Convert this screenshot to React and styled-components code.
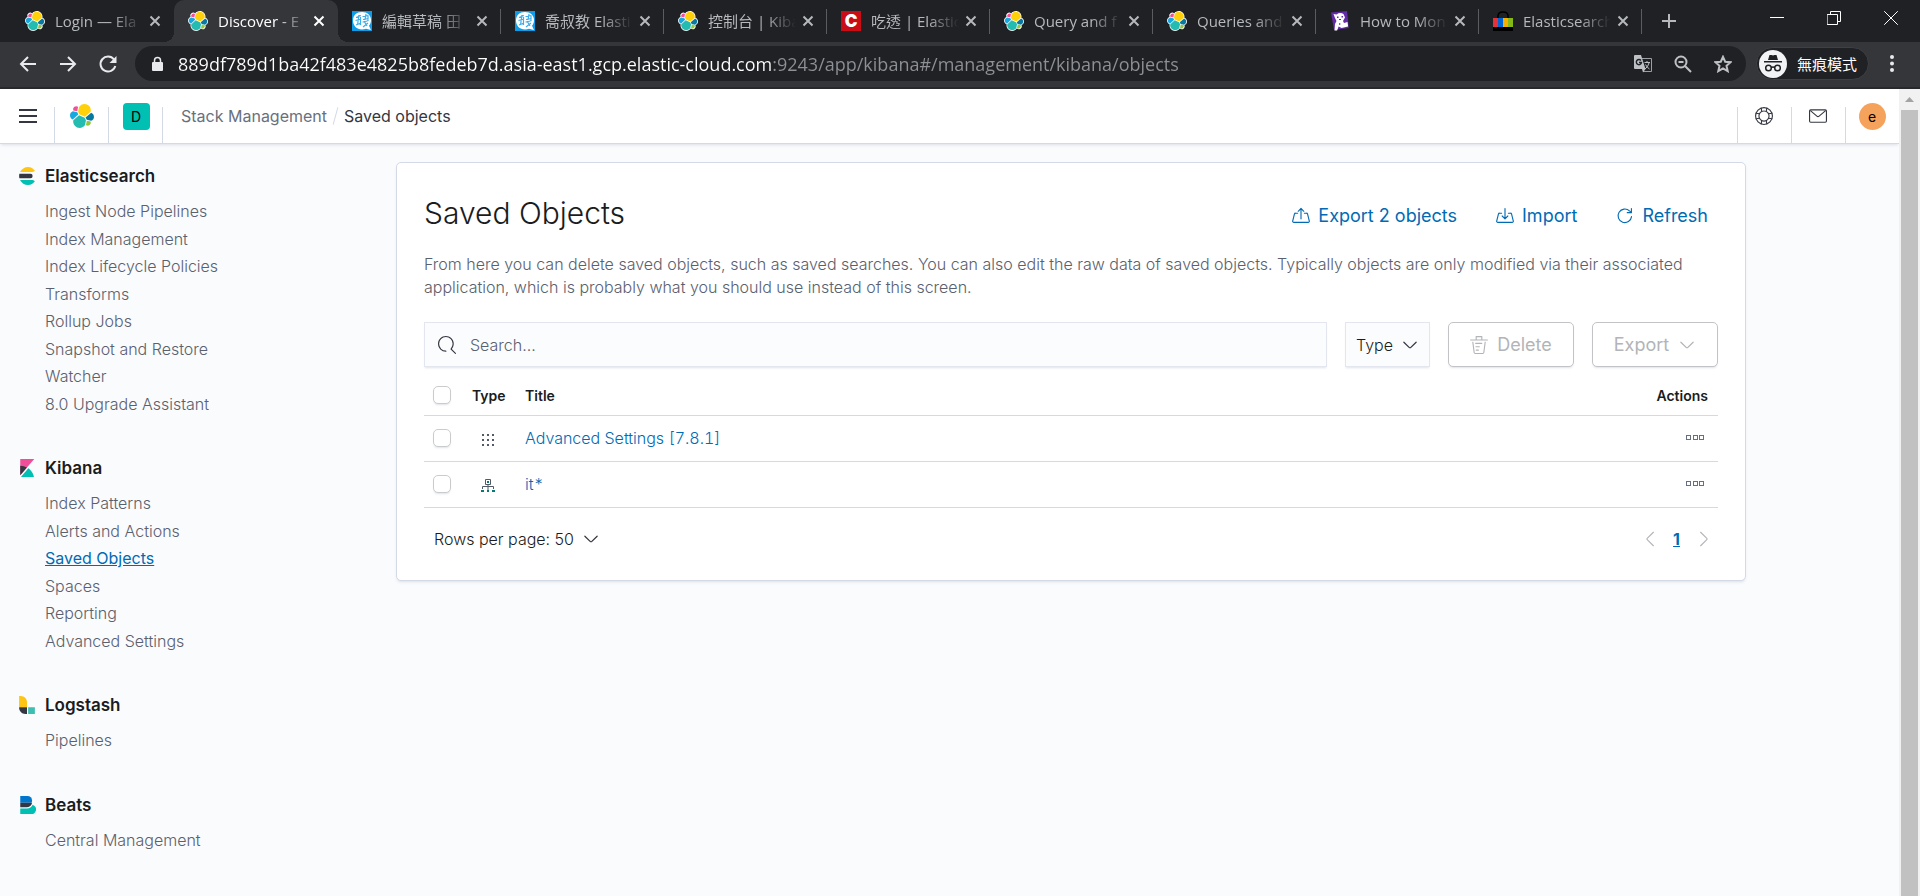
import React from 'react';
import styled, { createGlobalStyle, css } from 'styled-components';

const Global = createGlobalStyle`
  *, *::before, *::after { box-sizing: border-box; }
  html, body, #root { height: 100%; }
  body { margin: 0; overflow: hidden; background: #fafbfd; }
  button, input, select { font: inherit; color: inherit; margin: 0; }
  button { cursor: pointer; }
  svg { display: block; flex: none; }
`;

const uiFont = "Inter, 'Liberation Sans', sans-serif";
const chromeFont = "'Open Sans', 'Noto Sans CJK TC', sans-serif";

const plainButton = css`
  display: flex;
  align-items: center;
  justify-content: center;
  padding: 0;
  border: 0;
  background: none;
`;

const Window = styled.div`
  display: flex;
  flex-direction: column;
  height: 100vh;
`;

/* ---------- Browser frame ---------- */

const TabStrip = styled.div`
  display: flex;
  flex: none;
  height: 42px;
  padding: 0 1px 0 11px;
  background: #202124;
  font-family: ${chromeFont};
  font-size: 15px;
  color: #b5b8bc;
`;

const Tab = styled.div`
  position: relative;
  display: flex;
  align-items: center;
  flex: 0 1 ${(p) => (p.$active ? 164 : 163)}px;
  min-width: 0;
  padding: 0 11px 0 14px;
  border-radius: 10px 10px 0 0;
  background: ${(p) => (p.$active ? '#35363a' : 'transparent')};
  color: ${(p) => (p.$active ? '#ffffff' : 'inherit')};

  &::before, &::after {
    content: ${(p) => (p.$active ? "''" : 'none')};
    position: absolute;
    bottom: 0;
    width: 10px;
    height: 10px;
  }
  &::before {
    right: 100%;
    background: radial-gradient(circle at 0 0, transparent 10px, #35363a 10px);
  }
  &::after {
    left: 100%;
    background: radial-gradient(circle at 100% 0, transparent 10px, #35363a 10px);
  }
`;

const TabTitle = styled.span`
  flex: 1;
  min-width: 0;
  margin: 0 4px 0 10px;
  line-height: 24px;
  overflow: hidden;
  white-space: nowrap;
  mask-image: linear-gradient(90deg, #000 65%, transparent);
`;

const TabClose = styled.button`
  ${plainButton}
  width: 16px;
  height: 16px;
`;

const TabDivider = styled.i`
  position: absolute;
  right: 0;
  top: 9px;
  width: 1px;
  height: 25px;
  background: #5a5c60;
`;

const NewTab = styled.button`
  ${plainButton}
  width: 54px;
`;

const WindowControls = styled.div`
  display: flex;
  margin-left: auto;
  height: 36px;
`;

const WindowButton = styled.button`
  ${plainButton}
  width: 57px;
  color: #ffffff;
`;

const Toolbar = styled.div`
  display: flex;
  align-items: center;
  flex: none;
  height: 47px;
  padding: 0 13px 2px 8px;
  border-bottom: 2px solid #28292c;
  background: #35363a;
  font-family: ${chromeFont};
  color: #e8eaed;
`;

const ToolButton = styled.button`
  ${plainButton}
  width: ${(p) => p.$width || 40}px;
  height: 35px;
`;

const Omnibox = styled.div`
  display: flex;
  align-items: center;
  flex: 1;
  min-width: 0;
  height: 35px;
  margin-left: 7px;
  padding: 0 3px 0 15px;
  border-radius: 18px;
  background: #202124;
  color: #bdc1c6;
`;

const Address = styled.input`
  flex: 1;
  min-width: 0;
  height: 30px;
  margin-left: 13px;
  padding: 0;
  border: 0;
  outline: 0;
  font-size: 18px;
  color: #ffffff;
  background: linear-gradient(90deg, #ffffff 594px, #8d9196 594px) text;
  -webkit-text-fill-color: transparent;
`;

const Profile = styled.button`
  ${plainButton}
  gap: 10px;
  height: 33px;
  margin: 0 8px 0 10px;
  padding: 0 11px 0 2px;
  border: 1px solid #3f4044;
  border-radius: 17px;
  background: #202124;
  color: #ffffff;
  font-size: 15px;
`;

/* ---------- Kibana ---------- */

const Viewport = styled.div`
  display: flex;
  flex: 1;
  min-height: 0;
  font-family: ${uiFont};
  font-size: 16px;
  font-weight: 300;
  color: #343741;
`;

const Page = styled.div`
  flex: 1;
  min-width: 0;
  overflow: hidden;
`;

const ScrollTrack = styled.div`
  flex: none;
  width: 21px;
  padding: 0 2px;
  background: #f1f1f1;
`;

const ScrollArrow = styled.div`
  display: flex;
  align-items: center;
  justify-content: center;
  height: 21px;
`;

const ScrollThumb = styled.div`
  height: 100%;
  background: #c1c1c1;
`;

const Header = styled.header`
  display: flex;
  align-items: center;
  position: relative;
  height: 55px;
  padding-left: 1px;
  border-bottom: 1px solid #d3dae6;
  background: #ffffff;
  box-shadow: 0 2px 3px -1px rgba(152, 162, 179, 0.3);
`;

const HeaderCell = styled.div`
  display: flex;
  align-items: center;
  justify-content: center;
  flex: none;
  width: 54px;
  height: 54px;
  background: linear-gradient(#d3dae6, #d3dae6) ${(p) => (p.$side === 'left' ? 'left' : 'right')} bottom / 1px 36px no-repeat;
`;

const HeaderButton = styled.button`
  ${plainButton}
  width: 36px;
  height: 36px;
`;

const Avatar = styled.span`
  display: flex;
  align-items: center;
  justify-content: center;
  width: 27px;
  height: 27px;
  border-radius: ${(p) => (p.$round ? '50%' : '4px')};
  background: ${(p) => p.$color};
  color: #000000;
  font-size: 14px;
  font-weight: 400;
`;

const Breadcrumbs = styled.nav`
  display: flex;
  align-items: center;
  gap: 7px;
  flex: 1;
  margin-left: 18px;
  font-weight: 400;
`;

const Crumb = styled.a`
  color: ${(p) => (p.$current ? '#343741' : '#69707d')};
  text-decoration: none;
`;

const CrumbSlash = styled.i`
  width: 1px;
  height: 18px;
  margin: 0 1px;
  background: #d3dae6;
  transform: rotate(15deg);
`;

const Body = styled.div`
  display: flex;
  align-items: flex-start;
  padding: 18px;
`;

const SideNav = styled.nav`
  flex: none;
  width: 216px;
  margin-right: 27px;
`;

const NavGroup = styled.section`
  margin-bottom: 37px;
`;

const NavHeading = styled.h2`
  display: flex;
  align-items: center;
  gap: 9px;
  height: 28px;
  margin: 0 0 7px;
  font-size: 17px;
  font-weight: 600;
  color: #1a1c21;
`;

const NavList = styled.ul`
  display: grid;
  grid-auto-rows: 28px 27px;
  align-items: center;
  margin: 0;
  padding: 0 0 0 27px;
  list-style: none;
`;

const NavLink = styled.a`
  color: ${(p) => (p.$active ? '#006bb4' : '#5a616e')};
  font-weight: ${(p) => (p.$active ? 400 : 300)};
  text-decoration: ${(p) => (p.$active ? 'underline' : 'none')};
`;

const Main = styled.main`
  flex: 1;
  min-width: 0;
`;

const Panel = styled.section`
  max-width: 1350px;
  margin: 0 auto;
  padding: 27px 27px 18px;
  border: 1px solid #d3dae6;
  border-radius: 5px;
  background: #ffffff;
  box-shadow: 0 2px 3px -1px rgba(152, 162, 179, 0.3);
`;

const TitleRow = styled.div`
  display: flex;
  justify-content: space-between;
  height: 48px;
`;

const Title = styled.h1`
  margin: 0;
  font-size: 30px;
  line-height: 46px;
  font-weight: 300;
  color: #1a1c21;
`;

const TitleActions = styled.div`
  display: flex;
  align-items: flex-end;
  gap: 19px;
`;

const LinkButton = styled.button`
  ${plainButton}
  gap: 8px;
  height: 45px;
  padding: 0 10px;
  font-size: 18px;
  font-weight: 400;
  color: #006bb4;
`;

const Description = styled.p`
  margin: 15px 0 23px;
  line-height: 23px;
  color: #5a616e;
`;

const FilterRow = styled.div`
  display: flex;
  gap: 18px;
  height: 45px;
`;

const field = css`
  border: 1px solid #e3e6ef;
  background: #fbfcfd;
  box-shadow: 0 2px 2px -1px rgba(152, 162, 179, 0.3);
`;

const SearchBox = styled.label`
  ${field}
  display: flex;
  align-items: center;
  gap: 14px;
  flex: 1;
  min-width: 0;
  padding: 0 13px;
`;

const SearchInput = styled.input`
  flex: 1;
  min-width: 0;
  padding: 0;
  border: 0;
  outline: 0;
  background: none;
  &::placeholder { color: #5a616e; opacity: 1; }
`;

const SelectBox = styled.label`
  ${(p) => p.$framed && field}
  display: flex;
  align-items: center;
  gap: 8px;
  padding: 0 10px;
`;

const Select = styled.select`
  appearance: none;
  padding: 0;
  border: 0;
  outline: 0;
  background: none;
  color: #1a1c21;
`;

const OutlineButton = styled.button`
  ${plainButton}
  gap: 9px;
  width: 126px;
  border: 1px solid #c2c3c6;
  border-radius: 5px;
  background: #ffffff;
  box-shadow: 0 2px 2px -1px rgba(152, 162, 179, 0.3);
  font-size: 18px;
  font-weight: 400;
  color: #b2b4b8;
`;

const Table = styled.table`
  width: 100%;
  border-collapse: collapse;
  table-layout: fixed;
`;

const Row = styled.tr`
  height: ${(p) => (p.$head ? 48 : 46)}px;
  border-bottom: 1px solid #d3dae6;
`;

const cell = css`
  padding: 0 ${(p) => (p.$end ? 10 : 9)}px;
  text-align: ${(p) => (p.$end ? 'right' : 'left')};
`;

const HeadCell = styled.th`
  ${cell}
  width: ${(p) => (p.$width ? `${p.$width}px` : 'auto')};
  padding-top: 9px;
  font-size: 14px;
  font-weight: 600;
  color: #1a1c21;
`;

const Cell = styled.td`
  ${cell}
`;

const Checkbox = styled.input`
  appearance: none;
  display: block;
  width: 18px;
  height: 18px;
  margin: 0;
  border: 1px solid #c9cbcd;
  border-radius: 5px;
  background: #ffffff;
  box-shadow: 0 2px 2px -1px rgba(152, 162, 179, 0.3);
`;

const TypeIcon = styled.span`
  display: flex;
  padding: 3px 0 0 7px;
`;

const ObjectLink = styled.a`
  color: #006bb4;
  font-variant-numeric: tabular-nums;
  text-decoration: none;
`;

const MoreButton = styled.button`
  ${plainButton}
  width: 26px;
  height: 24px;
  margin-left: auto;
`;

const Footer = styled.div`
  display: flex;
  align-items: center;
  justify-content: space-between;
  height: 45px;
  margin-top: 9px;
`;

const Pager = styled.div`
  display: flex;
  align-items: center;
  padding-right: 1px;
`;

const PageButton = styled.button`
  ${plainButton}
  width: 27px;
  height: 27px;
  color: ${(p) => (p.$current ? '#006bb4' : '#b2b4b8')};
  font-weight: ${(p) => (p.$current ? 700 : 400)};
  text-decoration: ${(p) => (p.$current ? 'underline' : 'none')};
`;

/* ---------- Icons ---------- */

const Stroke = ({ size = 18, box = 16, w = 1, children }) => (
  <svg width={size} height={size} viewBox={`0 0 ${box} ${box}`} fill="none" stroke="currentColor" strokeWidth={w} strokeLinecap="round" strokeLinejoin="round" aria-hidden="true">
    {children}
  </svg>
);

const ElasticLogo = ({ size }) => (
  <svg width={size} height={size} viewBox="0 0 32 32" aria-hidden="true">
    <path fill="#fff" d="M32 16.77c0-2.68-1.66-5.03-4.16-5.94.11-.57.17-1.14.17-1.74C28 4.08 23.93 0 18.9 0c-2.94 0-5.68 1.4-7.4 3.8a4.83 4.83 0 0 0-7.52 5.6C1.6 10.3 0 12.6 0 15.2c0 2.69 1.67 5.06 4.19 5.96-.12.56-.17 1.15-.17 1.73 0 5 4.07 9.07 9.08 9.07 2.95 0 5.68-1.41 7.39-3.8a4.83 4.83 0 0 0 7.53-5.58C30.4 21.68 32 19.37 32 16.77" />
    <path fill="#fed10a" d="M12.58 13.79l7.02 3.2 7.08-6.2a7.85 7.85 0 0 0 .15-1.56 7.92 7.92 0 0 0-14.46-4.45l-1.18 6.1z" />
    <path fill="#24bbb1" d="M5.33 21.2c-.1.51-.15 1.03-.15 1.56 0 4.38 3.56 7.95 7.94 7.95 2.64 0 5.11-1.31 6.59-3.5l1.17-6.09-1.56-2.98-7.04-3.2z" />
    <path fill="#ef5098" d="M5.29 9.08l4.81 1.14 1.05-5.47a3.8 3.8 0 0 0-5.86 4.33z" />
    <path fill="#17a8e0" d="M4.87 10.23a5.31 5.31 0 0 0-3.6 5.01c0 2.22 1.36 4.18 3.43 4.97l6.75-6.1-1.24-2.65z" />
    <path fill="#93c83e" d="M20.87 27.2a3.8 3.8 0 0 0 5.84-4.3l-4.8-1.13z" />
    <path fill="#0779a1" d="M21.85 20.63l5.28 1.23a5.31 5.31 0 0 0 3.6-5.01c0-2.22-1.37-4.17-3.43-4.96l-6.9 6.05z" />
  </svg>
);

const BubbleLogo = () => (
  <svg width="20" height="20" viewBox="0 0 20 20" aria-hidden="true">
    <path fill="#0d9ce8" d="M0 0h20v20H0z" />
    <path fill="#fff" d="M10 1c5.4 0 9 3.400 9 8 0 2.800-1 4.600-2 5.800L19 19l-5-1.300c-1.200.5-2.500.8-4 .8-5.400 0-9-3.900-9-9S4.600 1 10 1z" />
    <path stroke="#38aeeb" strokeWidth="1.200" fill="none" d="M4 6.500l5-2M7 4l-1.500 10M3.500 9.500l5.500-1.500M4 14l5-2M8.500 6v8M10.500 5.500l6-1M14 3l-1 6M11 8.500l5.500-1M10.500 11l5-1M12 10l3 5M16 12l-5 4M16 5v5" />
  </svg>
);

const RedLogo = () => (
  <svg width="20" height="20" viewBox="0 0 20 20" aria-hidden="true">
    <path fill="#ca0c16" d="M0 0h20v20H0z" />
    <text x="10" y="16" textAnchor="middle" fontFamily="Inter, sans-serif" fontSize="17" fontWeight="900" fill="#fff">C</text>
  </svg>
);

const DogLogo = () => (
  <svg width="20" height="20" viewBox="0 0 20 20" aria-hidden="true">
    <path fill="#632ca6" d="M1 1.500L17 0l1.800 17L4 19z" />
    <path fill="#fff" d="M3.500 3l3 .5Q10 1 13.500 3L15 6.500l-2 3.500 1 2 3.500-1 .6 4.500-6.500 1.500-3-1.500-1.500 4H4.500L5 13l1.500-3L5 7z" />
    <path fill="#632ca6" d="M7 5.500h1.500V7H7zM11.500 5H13v1.500h-1.500zM9 8h2v1H9zM9 12l2 1-2 1z" />
  </svg>
);

const BagLogo = () => (
  <svg width="20" height="20" viewBox="0 0 20 20" aria-hidden="true">
    <path d="M5 7V5q0-4 5-4t5 4v2" fill="none" stroke="#000" strokeWidth="1.500" />
    <path fill="#e53238" d="M0 7h5v9H0z" />
    <path fill="#0064d2" d="M5 7h5v9H5z" />
    <path fill="#f5af02" d="M10 7h5v9h-5z" />
    <path fill="#86b817" d="M15 7h5v9h-5z" />
    <path fill="#000" d="M0 16h20v4H0z" />
  </svg>
);

const CloseIcon = () => (
  <Stroke size={16} w={2}><path d="M3.500 3.500l9 9M12.500 3.500l-9 9" strokeLinecap="butt" /></Stroke>
);

const ArrowDown = ({ size = 18 }) => (
  <svg width={size} height={size} viewBox="0 0 16 16" fill="currentColor" aria-hidden="true">
    <path d="M13.069 5.157L8.384 9.768a.546.546 0 0 1-.768 0L2.930 5.158a.552.552 0 0 0-.771 0 .53.53 0 0 0 0 .759l4.684 4.610c.641.631 1.672.630 2.312 0l4.684-4.610a.53.53 0 0 0 0-.760.552.552 0 0 0-.771 0z" />
  </svg>
);

const ElasticsearchIcon = () => (
  <svg width="18" height="18" viewBox="0 0 32 32" aria-hidden="true">
    <path fill="#343741" d="M2 16c0 1.384.194 2.720.537 4H22a4 4 0 0 0 0-8H2.537C2.194 13.280 2 14.616 2 16z" />
    <path fill="#fec514" d="M28.924 7.662A15 15 0 0 0 30 6.500 15.960 15.960 0 0 0 18 0C11.679 0 6.239 3.678 3.644 9H25.510a5.039 5.039 0 0 0 3.414-1.338z" />
    <path fill="#00bfb3" d="M25.510 23H3.645C6.240 28.323 11.679 32 18 32c4.854 0 9.200-2.170 12-6.500-.36-.4-.678-.8-1.076-1.162A5.030 5.030 0 0 0 25.510 23z" />
  </svg>
);

const KibanaIcon = () => (
  <svg width="18" height="18" viewBox="0 0 32 32" aria-hidden="true">
    <path fill="#f04e98" d="M4 0v28.789L28.935.017z" />
    <path fill="#343741" d="M4 12v16.790l11.906-13.738A24.721 24.721 0 0 0 4 12" />
    <path fill="#00bfb3" d="M18.479 16.664L6.268 30.754l-1.073 1.237h23.191c-1.252-6.292-4.883-11.719-9.908-15.327" />
  </svg>
);

const LogstashIcon = () => (
  <svg width="18" height="18" viewBox="0 0 32 32" aria-hidden="true">
    <path fill="#fec514" d="M2 0h3c6.075 0 11 4.925 11 11v9H2z" />
    <path fill="#343741" d="M2 20v1c0 6.075 4.925 11 11 11h3V20z" />
    <path fill="#3ebeb0" d="M18 20h12v12H18z" />
  </svg>
);

const BeatsIcon = () => (
  <svg width="18" height="18" viewBox="0 0 32 32" aria-hidden="true">
    <path fill="#0077cc" d="M4 0h13a8 8 0 0 1 8 8c0 1.500-.4 2.800-1 4H4z" />
    <path fill="#343741" d="M4 12h21c-.8 5-5 8-9.500 8H4z" />
    <path fill="#00bfb3" d="M4 22h12c4.500 0 8.500-2.500 10-6.500A8.300 8.300 0 0 1 21 32H4z" />
  </svg>
);

const GearIcon = () => (
  <Stroke><path d="M6.500 .5h3l.5 2.500 2 1 2-.5 1.500 2.500L14 8l1.500 2-1.500 2.500-2-.5-2 1-.5 2h-3L6 13l-2-1-2 .5L.5 10 2 8 .5 6 2 3.500 4 4l2-1z" /></Stroke>
);

/* ---------- Data ---------- */

const tabs = [
  { title: 'Login — Ela', icon: <ElasticLogo size={20} /> },
  { title: 'Discover - E', icon: <ElasticLogo size={20} />, active: true },
  { title: '編輯草稿 田', icon: <BubbleLogo />, divider: true },
  { title: '喬叔教 Elasti', icon: <BubbleLogo />, divider: true },
  { title: '控制台 | Kiba', icon: <ElasticLogo size={20} />, divider: true },
  { title: '吃透 | Elastic', icon: <RedLogo />, divider: true },
  { title: 'Query and f', icon: <ElasticLogo size={20} />, divider: true },
  { title: 'Queries and', icon: <ElasticLogo size={20} />, divider: true },
  { title: 'How to Mon', icon: <DogLogo />, divider: true },
  { title: 'Elasticsearch', icon: <BagLogo />, divider: true },
];

const groups = [
  {
    title: 'Elasticsearch',
    icon: <ElasticsearchIcon />,
    items: ['Ingest Node Pipelines', 'Index Management', 'Index Lifecycle Policies', 'Transforms', 'Rollup Jobs', 'Snapshot and Restore', 'Watcher', '8.0 Upgrade Assistant'],
  },
  {
    title: 'Kibana',
    icon: <KibanaIcon />,
    items: ['Index Patterns', 'Alerts and Actions', 'Saved Objects', 'Spaces', 'Reporting', 'Advanced Settings'],
  },
  { title: 'Logstash', icon: <LogstashIcon />, items: ['Pipelines'] },
  { title: 'Beats', icon: <BeatsIcon />, items: ['Central Management'] },
];

const DotsIcon = () => (
  <svg width="18" height="18" viewBox="0 0 18 18" fill="#535966" aria-hidden="true">
    {[4, 9, 14].map((y) => [3, 8, 13].map((x) => <rect key={`${x}-${y}`} x={x} y={y - 1} width="2" height="2" />))}
  </svg>
);

const PatternIcon = () => (
  <svg width="18" height="18" viewBox="0 0 18 18" fill="none" aria-hidden="true">
    <path stroke="#535966" d="M6.500 2.500h5v5h-5zM9 8v5M3.500 12V9.500h11V12" />
    <path fill="#017d73" d="M8 4h2v2H8zM2 13h3v2H2zM8 13h2v2H8zM13 13h3v2h-3z" />
  </svg>
);

const objects = [
  { title: 'Advanced Settings [7.8.1]', icon: <DotsIcon /> },
  { title: 'it*', icon: <PatternIcon /> },
];

/* ---------- View ---------- */

const BrowserFrame = () => (
  <>
    <TabStrip>
      {tabs.map((t) => (
        <Tab key={t.title} $active={t.active}>
          {t.icon}
          <TabTitle>{t.title}</TabTitle>
          <TabClose aria-label="Close tab"><CloseIcon /></TabClose>
          {t.divider && <TabDivider />}
        </Tab>
      ))}
      <NewTab aria-label="New tab"><Stroke size={16} w={2}><path d="M8 1v14M1 8h14" strokeLinecap="butt" /></Stroke></NewTab>
      <WindowControls>
        <WindowButton aria-label="Minimize"><Stroke size={14} box={14}><path d="M0 6.500h14" /></Stroke></WindowButton>
        <WindowButton aria-label="Restore"><Stroke size={14} box={14}><path d="M.5 3.500h10v10H.5zM3.500 3V.5h10v10H11" /></Stroke></WindowButton>
        <WindowButton aria-label="Close"><Stroke size={14} box={14}><path d="M.5.5l13 13M13.500.5l-13 13" /></Stroke></WindowButton>
      </WindowControls>
    </TabStrip>
    <Toolbar>
      <ToolButton aria-label="Back"><Stroke size={20} box={20} w={2}><path d="M18 10H3M10 3l-7 7 7 7" strokeLinecap="butt" strokeLinejoin="miter" /></Stroke></ToolButton>
      <ToolButton aria-label="Forward"><Stroke size={20} box={20} w={2}><path d="M2 10h15M10 3l7 7-7 7" strokeLinecap="butt" strokeLinejoin="miter" /></Stroke></ToolButton>
      <ToolButton aria-label="Reload">
        <Stroke size={20} box={20} w={2}><path d="M16 5.500A7.500 7.500 0 1 0 17.300 12" strokeLinecap="butt" /><path d="M18.500 2v7H11.500z" fill="currentColor" stroke="none" /></Stroke>
      </ToolButton>
      <Omnibox>
        <svg width="15" height="16" viewBox="0 0 15 16" aria-hidden="true">
          <path fill="#e8eaed" d="M3 6h9a1 1 0 0 1 1 1v7a1 1 0 0 1-1 1H3a1 1 0 0 1-1-1V7a1 1 0 0 1 1-1z" />
          <path fill="none" stroke="#e8eaed" strokeWidth="1.500" d="M4.500 7V4.500a3 3 0 0 1 6 0V7" />
        </svg>
        <Address aria-label="Address" readOnly value="889df789d1ba42f483e4825b8fedeb7d.asia-east1.gcp.elastic-cloud.com:9243/app/kibana#/management/kibana/objects" />
        <ToolButton aria-label="Translate">
          <svg width="18" height="18" viewBox="0 0 18 18" aria-hidden="true">
            <path fill="none" stroke="#9aa0a6" d="M8 3.500h9.500v13H9" />
            <path fill="#bdc1c6" d="M1 0h6l4.500 14H1a1 1 0 0 1-1-1V1a1 1 0 0 1 1-1zM8 14h3.500L9 17.500z" />
            <path fill="none" stroke="#202124" strokeWidth="1.400" d="M7 5.500A2.600 2.600 0 1 0 7.500 7.500H5" />
            <path fill="none" stroke="#bdc1c6" d="M10.500 7.500H16M13 6v1.500M15 8q-1 4-4 6M11.500 9.500q1.500 3 4 4.500" />
          </svg>
        </ToolButton>
        <ToolButton aria-label="Zoom"><Stroke size={18} box={18} w={2}><circle cx="7" cy="7" r="5.500" /><path d="M11 11l6 6M4.500 7h5" strokeLinecap="butt" /></Stroke></ToolButton>
        <ToolButton aria-label="Bookmark this page"><Stroke size={18} box={18} w={2}><path d="M9 1.800l2.200 4.900 5.300.5-4 3.600 1.200 5.300L9 13.300l-4.700 2.800 1.200-5.300-4-3.600 5.300-.5z" strokeLinejoin="miter" /></Stroke></ToolButton>
      </Omnibox>
      <Profile>
        <svg width="28" height="28" viewBox="0 0 28 28" aria-hidden="true">
          <circle cx="14" cy="14" r="14" fill="#f1f3f4" />
          <path fill="#202124" d="M10.500 5h2l1.500.5 1.500-.5h2l1.500 5h-10zM5 11h18v1.500H5z" />
          <path fill="none" stroke="#202124" strokeWidth="1.500" d="M12 17.500q2-1 4 0" />
          <circle cx="9.500" cy="18" r="2.800" fill="none" stroke="#202124" strokeWidth="1.500" />
          <circle cx="18.500" cy="18" r="2.800" fill="none" stroke="#202124" strokeWidth="1.500" />
        </svg>
        無痕模式
      </Profile>
      <ToolButton $width={30} aria-label="Browser menu">
        <svg width="4" height="17" viewBox="0 0 4 17" fill="#e8eaed" aria-hidden="true"><circle cx="2" cy="2" r="2" /><circle cx="2" cy="8.500" r="2" /><circle cx="2" cy="15" r="2" /></svg>
      </ToolButton>
    </Toolbar>
  </>
);

const KibanaHeader = () => (
  <Header>
    <HeaderCell>
      <HeaderButton aria-label="Toggle navigation">
        <svg width="18" height="18" viewBox="0 0 18 18" fill="#343741" aria-hidden="true"><path d="M0 2h18v2H0zM0 8h18v2H0zM0 14h18v2H0z" /></svg>
      </HeaderButton>
    </HeaderCell>
    <HeaderCell><ElasticLogo size={26} /></HeaderCell>
    <HeaderCell><Avatar $color="#00bfb3">D</Avatar></HeaderCell>
    <Breadcrumbs aria-label="Breadcrumbs">
      <Crumb href="#management">Stack Management</Crumb>
      <CrumbSlash />
      <Crumb href="#objects" $current>Saved objects</Crumb>
    </Breadcrumbs>
    <HeaderCell $side="left">
      <HeaderButton aria-label="Help">
        <Stroke><circle cx="8" cy="8" r="7.500" /><circle cx="8" cy="8" r="4.500" /><path d="M5.500 1l.5 3M10.500 1L10 4M5.500 15l.5-3M10.500 15l-.5-3M1 5.500l3 .5M1 10.500l3-.5M15 5.500L12 6M15 10.500l-3-.5" /></Stroke>
      </HeaderButton>
    </HeaderCell>
    <HeaderCell $side="left">
      <HeaderButton aria-label="News">
        <Stroke><rect x=".5" y="2.500" width="15" height="11" rx="1" /><path d="M1.500 3.500l5.500 4.600q1 .8 2 0l5.500-4.600" /></Stroke>
      </HeaderButton>
    </HeaderCell>
    <HeaderCell $side="left"><Avatar $round $color="#f5a35c">e</Avatar></HeaderCell>
  </Header>
);

const ManagementNav = () => (
  <SideNav aria-label="Management">
    {groups.map((g) => (
      <NavGroup key={g.title}>
        <NavHeading>{g.icon}{g.title}</NavHeading>
        <NavList>
          {g.items.map((item) => (
            <li key={item}><NavLink href="#nav" $active={item === 'Saved Objects'}>{item}</NavLink></li>
          ))}
        </NavList>
      </NavGroup>
    ))}
    <NavHeading><GearIcon /></NavHeading>
  </SideNav>
);

const SavedObjects = () => (
  <Panel>
    <TitleRow>
      <Title>Saved Objects</Title>
      <TitleActions>
        <LinkButton>
          <Stroke><path d="M5 5.500H3.200a1 1 0 0 0-1 .7L.6 12.500a1 1 0 0 0 1 1.200h12.800a1 1 0 0 0 1-1.200l-1.600-6.300a1 1 0 0 0-1-.7H11M8 10.500v-9M5.500 3.800L8 1.300l2.500 2.500" /></Stroke>
          Export 2 objects
        </LinkButton>
        <LinkButton>
          <Stroke><path d="M5 5.500H3.200a1 1 0 0 0-1 .7L.6 12.500a1 1 0 0 0 1 1.200h12.800a1 1 0 0 0 1-1.200l-1.600-6.300a1 1 0 0 0-1-.7H11M8 1.300v9M5.500 8L8 10.500 10.500 8" /></Stroke>
          Import
        </LinkButton>
        <LinkButton>
          <Stroke><path d="M13.800 8.500A6 6 0 1 1 12 3.500l1.500 1.300M13.700 1.300v3.700H10" /></Stroke>
          Refresh
        </LinkButton>
      </TitleActions>
    </TitleRow>
    <Description>
      From here you can delete saved objects, such as saved searches. You can also edit the raw data of saved objects. Typically objects are only modified via their associated application, which is probably what you should use instead of this screen.
    </Description>
    <FilterRow>
      <SearchBox>
        <svg width="18" height="18" viewBox="0 0 16 16" fill="#343741" aria-hidden="true">
          <path d="M11.271 11.978l3.872 3.873a.502.502 0 0 0 .708 0 .502.502 0 0 0 0-.708l-3.565-3.564c2.380-2.747 2.267-6.923-.342-9.532-2.730-2.730-7.170-2.730-9.898 0-2.728 2.729-2.728 7.170 0 9.900a6.955 6.955 0 0 0 4.949 2.050.5.5 0 0 0 0-1 5.960 5.960 0 0 1-4.242-1.757 6.010 6.010 0 0 1 0-8.486 6.004 6.004 0 0 1 8.484 0 6.010 6.010 0 0 1 0 8.486.5.5 0 0 0 .034.738z" />
        </svg>
        <SearchInput type="search" placeholder="Search..." aria-label="Search" />
      </SearchBox>
      <SelectBox $framed>
        <Select aria-label="Type"><option>Type</option></Select>
        <ArrowDown />
      </SelectBox>
      <OutlineButton disabled>
        <Stroke><path d="M.5 3.500h15M5.500 3.500v-3h5v3M2.500 5.500l1.200 9.200a.9.9 0 0 0 .9.800h6.800a.9.9 0 0 0 .9-.8l1.200-9.200M5 6.500h5.500M5.300 9.500h3M5.500 12.500h2" /></Stroke>
        Delete
      </OutlineButton>
      <OutlineButton disabled>Export <ArrowDown /></OutlineButton>
    </FilterRow>
    <Table>
      <thead>
        <Row $head>
          <HeadCell $width={39}><Checkbox type="checkbox" aria-label="Select all rows" /></HeadCell>
          <HeadCell $width={53}>Type</HeadCell>
          <HeadCell>Title</HeadCell>
          <HeadCell $width={90} $end>Actions</HeadCell>
        </Row>
      </thead>
      <tbody>
        {objects.map((o) => (
          <Row key={o.title}>
            <Cell><Checkbox type="checkbox" aria-label={`Select ${o.title}`} /></Cell>
            <Cell><TypeIcon>{o.icon}</TypeIcon></Cell>
            <Cell><ObjectLink href="#object">{o.title}</ObjectLink></Cell>
            <Cell $end>
              <MoreButton aria-label="All actions">
                <svg width="18" height="6" viewBox="0 0 18 6" fill="none" stroke="#69707d" shapeRendering="crispEdges" aria-hidden="true"><path d="M.5 .5h4v4h-4zM7.500 .5h4v4h-4zM13.500 .5h4v4h-4z" /></svg>
              </MoreButton>
            </Cell>
          </Row>
        ))}
      </tbody>
    </Table>
    <Footer>
      <SelectBox>
        <Select aria-label="Rows per page"><option>Rows per page: 50</option></Select>
        <ArrowDown />
      </SelectBox>
      <Pager>
        <PageButton disabled aria-label="Previous page"><Stroke><path d="M11 2L5.500 7.500q-.5.5 0 1L11 14" /></Stroke></PageButton>
        <PageButton $current>1</PageButton>
        <PageButton disabled aria-label="Next page"><Stroke><path d="M5 2l5.500 5.500q.5.5 0 1L5 14" /></Stroke></PageButton>
      </Pager>
    </Footer>
  </Panel>
);

export default function App() {
  return (
    <Window>
      <Global />
      <BrowserFrame />
      <Viewport>
        <Page>
          <KibanaHeader />
          <Body>
            <ManagementNav />
            <Main><SavedObjects /></Main>
          </Body>
        </Page>
        <ScrollTrack>
          <ScrollArrow><svg width="9" height="5" viewBox="0 0 9 5" aria-hidden="true"><path d="M4.500 0L9 5H0z" fill="#a3a3a3" /></svg></ScrollArrow>
          <ScrollThumb />
        </ScrollTrack>
      </Viewport>
    </Window>
  );
}
